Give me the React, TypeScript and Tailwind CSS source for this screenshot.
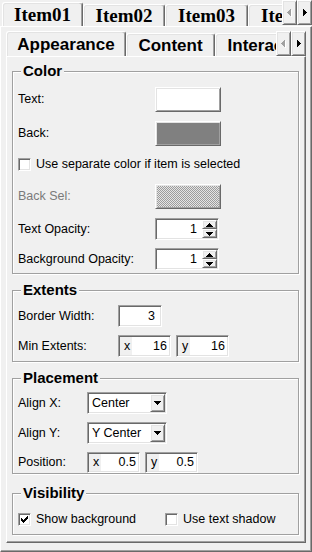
import React from "react";

const SUNKEN =
  "border border-t-[#a0a0a0] border-l-[#a0a0a0] border-r-white border-b-white shadow-[inset_1px_1px_0_#696969,inset_-1px_-1px_0_#e3e3e3]";
const RAISED =
  "border border-t-white border-l-white border-r-[#696969] border-b-[#696969] shadow-[inset_1px_1px_0_#e3e3e3,inset_-1px_-1px_0_#a0a0a0]";

const P_DOWN = "M0 0h7v1h-1v1h-1v1h-1v1h-1v-1h-1v-1h-1v-1h-1z";
const P_UP = "M3 0h1v1h1v1h1v1h1v1h-7v-1h1v-1h1v-1h1z";
const P_RIGHT = "M0 0h1v1h1v1h1v1h1v1h-1v1h-1v1h-1v1h-1z";
const P_LEFT = "M4 0v7h-1v-1h-1v-1h-1v-1h-1v-1h1v-1h1v-1h1v-1z";
const P_CHECK =
  "M6 0h1v1h-1z M5 1h2v1h-2z M0 2h1v1h-1z M4 2h3v1h-3z M0 3h2v1h-2z M3 3h3v1h-3z M0 4h5v1h-5z M1 5h3v1h-3z M2 6h1v1h-1z";

function ArrowDown() {
  return (
    <svg width="7" height="4" viewBox="0 0 7 4" className="block">
      <path d={P_DOWN} fill="#000" />
    </svg>
  );
}

function ArrowUp() {
  return (
    <svg width="7" height="4" viewBox="0 0 7 4" className="block">
      <path d={P_UP} fill="#000" />
    </svg>
  );
}

function ScrollPair() {
  return (
    <div className="flex h-[25px] shrink-0 self-start">
      <div className={`${RAISED} w-[15px] flex items-center justify-center bg-[#f0f0f0]`}>
        <svg width="5" height="8" viewBox="0 0 5 8" className="block">
          <path d={P_LEFT} fill="#ffffff" transform="translate(1 1)" />
          <path d={P_LEFT} fill="#a0a0a0" />
        </svg>
      </div>
      <div className={`${RAISED} w-[15px] flex items-center justify-center bg-[#f0f0f0]`}>
        <svg width="4" height="7" viewBox="0 0 4 7" className="block">
          <path d={P_RIGHT} fill="#000" />
        </svg>
      </div>
    </div>
  );
}

const TAB_BORDER =
  "border-l border-t border-r border-l-white border-t-white border-r-[#696969] shadow-[inset_-1px_0_0_#a0a0a0,inset_1px_1px_0_#e3e3e3] rounded-t-[3px]";

function OuterTab({ label, selected, w }: { label: string; selected?: boolean; w: string }) {
  return (
    <div
      className={`${w} ${selected ? "h-[24px]" : "h-[22px]"} ${TAB_BORDER} shrink-0 flex items-center justify-center font-['Liberation_Serif',serif] font-bold text-[19px] leading-none whitespace-nowrap`}
    >
      {label}
    </div>
  );
}

function InnerTab({ label, selected, w }: { label: string; selected?: boolean; w: string }) {
  return (
    <div
      className={`${w} ${selected ? "h-[25px]" : "h-[23px]"} ${TAB_BORDER} shrink-0 flex items-center justify-center font-bold text-[17px] leading-none whitespace-nowrap`}
    >
      {label}
    </div>
  );
}

function Group({
  title,
  className,
  children,
}: {
  title: string;
  className: string;
  children: React.ReactNode;
}) {
  return (
    <fieldset
      className={`border border-[#a0a0a0] shadow-[inset_1px_1px_0_#fff,1px_1px_0_#fff] pl-[5px] pr-[5px] ${className}`}
    >
      <legend className="ml-[3px] px-[2px] bg-[#f0f0f0] text-[15px] font-bold leading-[18px]">{title}</legend>
      {children}
    </fieldset>
  );
}

function Row({
  label,
  lw,
  className,
  gray,
  children,
}: {
  label: string;
  lw: string;
  className: string;
  gray?: boolean;
  children: React.ReactNode;
}) {
  return (
    <div className={`flex items-center ${className}`}>
      <div className={`${lw} shrink-0 whitespace-nowrap ${gray ? "text-[#7a7a7a]" : "text-black"}`}>{label}</div>
      {children}
    </div>
  );
}

function Check({ checked }: { checked?: boolean }) {
  return (
    <div className={`${SUNKEN} w-[13px] h-[13px] bg-white shrink-0 flex items-center justify-center`}>
      {checked && (
        <svg width="7" height="7" viewBox="0 0 7 7" className="block">
          <path d={P_CHECK} fill="#000" />
        </svg>
      )}
    </div>
  );
}

function Spin({ value }: { value: string }) {
  return (
    <div className={`${SUNKEN} w-[64px] h-[22px] p-[1px] bg-white flex`}>
      <div className="flex-1 bg-white text-right pr-[5px] leading-[18px]">{value}</div>
      <div className="w-[15px] flex flex-col">
        <div className={`${RAISED} flex-1 bg-[#f0f0f0] flex items-center justify-center`}>
          <ArrowUp />
        </div>
        <div className={`${RAISED} flex-1 bg-[#f0f0f0] flex items-center justify-center`}>
          <ArrowDown />
        </div>
      </div>
    </div>
  );
}

function Combo({ value }: { value: string }) {
  return (
    <div className={`${SUNKEN} w-[80px] h-[22px] p-[1px] bg-white flex`}>
      <div className="flex-1 bg-white pl-[3px] leading-[18px] whitespace-nowrap">{value}</div>
      <div className={`${RAISED} w-[15px] bg-[#f0f0f0] flex items-center justify-center`}>
        <ArrowDown />
      </div>
    </div>
  );
}

function XY({ axis, value, h }: { axis: string; value: string; h: string }) {
  return (
    <div className={`${SUNKEN} w-[53px] ${h} p-[1px] flex`}>
      <div className="w-[12px] pl-[4px] flex items-center">{axis}</div>
      <div className="flex-1 bg-white text-right pr-[2px] flex items-center justify-end">{value}</div>
    </div>
  );
}

export default function App() {
  return (
    <div className="w-[312px] h-[552px] bg-[#f0f0f0] overflow-hidden flex flex-col font-['Liberation_Sans',Arial,sans-serif] text-[12.5px] text-black">
      {/* outer tab strip */}
      <div className="flex h-[26px] shrink-0">
        <div className="flex flex-1 min-w-0 items-end overflow-hidden pl-[2px]">
          <OuterTab label="Item01" selected w="w-[81px]" />
          <OuterTab label="Item02" w="w-[82px]" />
          <OuterTab label="Item03" w="w-[83px]" />
          <OuterTab label="Item04" w="w-[83px]" />
        </div>
        <ScrollPair />
      </div>

      {/* outer panel */}
      <div className="flex-1 min-h-0 flex flex-col border border-t-white border-l-white border-r-[#696969] border-b-[#696969] shadow-[inset_-1px_-1px_0_#a0a0a0] pl-[5px] pr-[5px] pt-[4px] pb-[8px]">
        {/* inner tab strip */}
        <div className="flex h-[25px] shrink-0">
          <div className="flex flex-1 min-w-0 items-end overflow-hidden">
            <InnerTab label="Appearance" selected w="w-[120px]" />
            <InnerTab label="Content" w="w-[89px]" />
            <InnerTab label="Interaction" w="w-[112px]" />
          </div>
          <ScrollPair />
        </div>

        {/* inner panel */}
        <div className="flex-1 min-h-0 flex flex-col border border-t-white border-l-white border-r-[#696969] border-b-[#696969] shadow-[inset_-1px_-1px_0_#a0a0a0] pl-[5px] pr-[6px]">
          <Group title="Color" className="mt-[5px] pb-[3px]">
            <Row label="Text:" lw="w-[137px]" className="mt-[7px] h-[25px]">
              <div className={`${RAISED} w-[66px] h-[25px] bg-white`} />
            </Row>
            <Row label="Back:" lw="w-[137px]" className="mt-[9px] h-[25px]">
              <div className={`${RAISED} w-[66px] h-[25px] bg-[#808080]`} />
            </Row>
            <div className="mt-[6px] h-[25px] flex items-center gap-[5px]">
              <Check />
              <span className="whitespace-nowrap">Use separate color if item is selected</span>
            </div>
            <Row label="Back Sel:" lw="w-[137px]" className="mt-[7px] h-[25px]" gray>
              <div
                className={`${RAISED} w-[66px] h-[25px] bg-[image:conic-gradient(#9c9c9c_25%,#e4e4e4_0_50%,#9c9c9c_0_75%,#e4e4e4_0)] bg-[length:2px_2px]`}
              />
            </Row>
            <Row label="Text Opacity:" lw="w-[137px]" className="mt-[9px] h-[22px]">
              <Spin value="1" />
            </Row>
            <Row label="Background Opacity:" lw="w-[137px]" className="mt-[8px] h-[22px]">
              <Spin value="1" />
            </Row>
          </Group>

          <Group title="Extents" className="mt-[7px] pb-[4px]">
            <Row label="Border Width:" lw="w-[100px]" className="mt-[6px] h-[22px]">
              <div className={`${SUNKEN} w-[44px] h-[22px] p-[1px] bg-white text-right pr-[6px] leading-[18px]`}>3</div>
            </Row>
            <Row label="Min Extents:" lw="w-[100px]" className="mt-[8px] h-[22px]">
              <div className="flex gap-[5px]">
                <XY axis="x" value="16" h="h-[22px]" />
                <XY axis="y" value="16" h="h-[22px]" />
              </div>
            </Row>
          </Group>

          <Group title="Placement" className="mt-[7px] pb-[0px]">
            <Row label="Align X:" lw="w-[69px]" className="mt-[5px] h-[22px]">
              <Combo value="Center" />
            </Row>
            <Row label="Align Y:" lw="w-[69px]" className="mt-[8px] h-[22px]">
              <Combo value="Y Center" />
            </Row>
            <Row label="Position:" lw="w-[69px]" className="mt-[8px] h-[21px]">
              <div className="flex gap-[5px]">
                <XY axis="x" value="0.5" h="h-[21px]" />
                <XY axis="y" value="0.5" h="h-[21px]" />
              </div>
            </Row>
          </Group>

          <Group title="Visibility" className="mt-[10px] pb-[4px]">
            <div className="mt-[6px] h-[22px] flex items-center">
              <div className="w-[147px] shrink-0 flex items-center gap-[5px]">
                <Check checked />
                <span className="whitespace-nowrap">Show background</span>
              </div>
              <div className="flex items-center gap-[5px]">
                <Check />
                <span className="whitespace-nowrap">Use text shadow</span>
              </div>
            </div>
          </Group>
        </div>
      </div>
    </div>
  );
}
